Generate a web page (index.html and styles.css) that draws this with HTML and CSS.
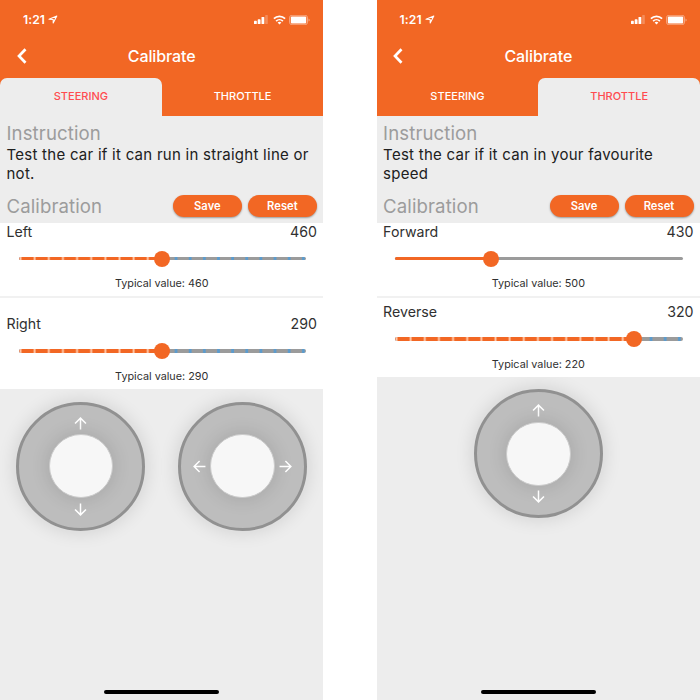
FILE: index.html
```
<!DOCTYPE html>
<html lang="en">
<head>
<meta charset="utf-8">
<title>Calibrate</title>
<link rel="stylesheet" href="styles.css">
</head>
<body>
<svg class="defs" width="0" height="0" aria-hidden="true">
  <symbol id="location" viewBox="0 0 10 9"><path d="M1 4.3 8.8 1 5.2 8V4.5Z" fill="none" stroke="#fff" stroke-width="1.1" stroke-linejoin="round"/></symbol>
  <symbol id="signal" viewBox="0 0 14 9"><g fill="#fff"><rect x="0" y="5.8" width="2.8" height="3.2" rx=".6"/><rect x="3.7" y="4.3" width="2.8" height="4.7" rx=".6"/><rect x="7.5" y="2" width="2.8" height="7" rx=".6"/><rect x="11.2" y="0" width="2.6" height="9" rx=".6" opacity=".25"/></g></symbol>
  <symbol id="wifi" viewBox="0 0 13 10"><g fill="none" stroke="#fff" stroke-width="1.7"><path d="M.9 3.7a8 8 0 0 1 11.2 0"/><path d="M3.1 6.1a4.9 4.9 0 0 1 6.8 0"/></g><path d="M4.6 7.6a2.8 2.8 0 0 1 3.8 0L6.5 9.6Z" fill="#fff"/></symbol>
  <symbol id="battery" viewBox="0 0 21 10"><rect x=".5" y=".3" width="18" height="9.4" rx="2.4" fill="none" stroke="#fff" stroke-opacity=".4"/><rect x="1.8" y="1.4" width="15.4" height="7.2" rx="1" fill="#fff"/><path d="M19.6 3.4v3.2q1-.5 1-1.6t-1-1.6Z" fill="#fff" opacity=".5"/></symbol>
  <symbol id="back" viewBox="0 0 10 16"><path d="M8.5 1.2 2 8l6.5 6.8" fill="none" stroke="#fff" stroke-width="2.7"/></symbol>
  <symbol id="arrow" viewBox="0 0 14 14"><path d="M7 13.4V1.6M1.1 7.1 7 1.2l5.9 5.9" fill="none" stroke="#fff" stroke-width="1.6"/></symbol>
</svg>
<main class="screens">
  <section class="phone">
    <header class="header">
      <div class="status"><span class="time">1:21</span><svg class="i-location"><use href="#location"/></svg><span class="grow"></span><svg class="i-signal"><use href="#signal"/></svg><svg class="i-wifi"><use href="#wifi"/></svg><svg class="i-battery"><use href="#battery"/></svg></div>
      <div class="titlebar"><svg class="i-back"><use href="#back"/></svg><h1>Calibrate</h1></div>
      <nav class="tabs"><span class="tab active">STEERING</span><span class="tab">THROTTLE</span></nav>
    </header>
    <div class="intro">
      <h2>Instruction</h2>
      <p>Test the car if it can run in straight line or<br>not.</p>
      <div class="actions"><h2>Calibration</h2><button>Save</button><button>Reset</button></div>
    </div>
    <div class="setting">
      <div class="row"><span>Left</span><span class="value">460</span></div>
      <div class="slider ticked"><div class="fill" style="width:49.8%"></div></div>
      <div class="typical">Typical value: 460</div>
    </div>
    <div class="setting tall">
      <div class="row"><span>Right</span><span class="value">290</span></div>
      <div class="slider ticked"><div class="fill" style="width:49.8%"></div></div>
      <div class="typical">Typical value: 290</div>
    </div>
    <div class="pads">
      <div class="pad vertical"><svg class="arrow up"><use href="#arrow"/></svg><div class="knob"></div><svg class="arrow down"><use href="#arrow"/></svg></div>
      <div class="pad"><svg class="arrow left"><use href="#arrow"/></svg><div class="knob"></div><svg class="arrow right"><use href="#arrow"/></svg></div>
    </div>
    <div class="home"></div>
  </section>
  <section class="phone">
    <header class="header">
      <div class="status"><span class="time">1:21</span><svg class="i-location"><use href="#location"/></svg><span class="grow"></span><svg class="i-signal"><use href="#signal"/></svg><svg class="i-wifi"><use href="#wifi"/></svg><svg class="i-battery"><use href="#battery"/></svg></div>
      <div class="titlebar"><svg class="i-back"><use href="#back"/></svg><h1>Calibrate</h1></div>
      <nav class="tabs"><span class="tab">STEERING</span><span class="tab active">THROTTLE</span></nav>
    </header>
    <div class="intro">
      <h2>Instruction</h2>
      <p>Test the car if it can in your favourite<br>speed</p>
      <div class="actions"><h2>Calibration</h2><button>Save</button><button>Reset</button></div>
    </div>
    <div class="setting">
      <div class="row"><span>Forward</span><span class="value">430</span></div>
      <div class="slider"><div class="fill" style="width:33.3%"></div></div>
      <div class="typical">Typical value: 500</div>
    </div>
    <div class="setting">
      <div class="row"><span>Reverse</span><span class="value">320</span></div>
      <div class="slider ticked"><div class="fill" style="width:83%"></div></div>
      <div class="typical">Typical value: 220</div>
    </div>
    <div class="pads">
      <div class="pad vertical"><svg class="arrow up"><use href="#arrow"/></svg><div class="knob"></div><svg class="arrow down"><use href="#arrow"/></svg></div>
    </div>
    <div class="home"></div>
  </section>
</main>
</body>
</html>
```
FILE: styles.css
```
* { box-sizing: border-box; }
body { margin: 0; background: #fff; font-family: Inter, "Liberation Sans", sans-serif; color: #303030; }
h1, h2, p { margin: 0; font-weight: 400; }
.defs { position: absolute; }
.screens { display: flex; justify-content: space-between; width: 700px; height: 700px; overflow: hidden; }
.phone { width: 323.4px; height: 700px; background: #ededed; display: flex; flex-direction: column; }
.header { height: 115.6px; background: #f26724; color: #fff; display: flex; flex-direction: column; flex: none; }
.status { height: 38px; display: flex; align-items: center; padding: 1px 13px 0 23px; }
.time { font-size: 12.2px; font-weight: 600; letter-spacing: .05px; }
.grow { flex: 1; }
.i-location { width: 10px; height: 9px; margin-left: 3px; }
.i-signal { width: 14px; height: 9px; margin-right: 4.5px; }
.i-wifi { width: 13px; height: 10px; margin-right: 3.5px; }
.i-battery { width: 21px; height: 10px; }
.titlebar { height: 40.3px; display: grid; grid-template-columns: 40px 1fr 40px; align-items: center; padding-bottom: 4px; }
.i-back { width: 10px; height: 16px; margin-left: 16.5px; }
h1 { font-size: 16px; line-height: 20px; font-weight: 500; text-align: center; letter-spacing: -.1px; white-space: nowrap; }
.tabs { display: flex; flex: 1; }
.tab { flex: 1; display: flex; align-items: center; justify-content: center; font-size: 11px; font-weight: 500; padding-bottom: 1px; }
.tab.active { background: #ededed; color: #ff4b50; border-radius: 7px 7px 0 0; }
.intro { height: 107.4px; flex: none; padding: 6.4px 6.5px 0; }
h2 { font-size: 18.6px; line-height: 22px; color: #9c9c9c; letter-spacing: .1px; }
p { font-size: 15px; line-height: 19px; letter-spacing: .26px; color: #202020; white-space: nowrap; padding-top: .6px; }
.actions { display: flex; align-items: center; gap: 6px; margin-top: 12.1px; }
.actions h2 { flex: 1; }
button { width: 69px; height: 22px; border: 0; border-radius: 11px; background: #f26724; color: #fff; font: 600 11.2px Inter, sans-serif; letter-spacing: .05px; padding: 0; box-shadow: 0 1px 2px rgba(0,0,0,.35); }
.setting { height: 73.2px; flex: none; background: #fff; padding: 0 6.5px; }
.setting + .setting { height: 80.8px; border-top: 2px solid #f1f1f1; padding-top: 5px; }
.setting + .setting.tall { height: 93px; padding-top: 17.2px; }
.row { display: flex; justify-content: space-between; font-size: 14.2px; line-height: 18px; letter-spacing: 0; }
.slider { position: relative; height: 3.4px; margin: 16px 11px 0 12px; border-radius: 2px; background: #9b9b9b; }
.slider.ticked { background: linear-gradient(90deg, transparent 5.3px, #5b9bcd 6.2px, #5b9bcd 8px, transparent 8.9px) -5.6px 0 / 14.15px 100% repeat-x, #9b9b9b; }
.fill { position: relative; height: 100%; border-radius: 2px 0 0 2px; background: #f26724; }
.ticked .fill { background: linear-gradient(90deg, transparent 5.7px, #ffc9aa 6.6px, #ffc9aa 7.6px, transparent 8.5px) -5.6px 0 / 14.15px 100% repeat-x, #f26724; }
.fill::after { content: ""; position: absolute; right: -8px; top: -6.3px; width: 16px; height: 16px; border-radius: 50%; background: #f26724; }
.typical { text-align: center; font-size: 10.8px; line-height: 14px; margin-top: 17px; letter-spacing: 0; }
.pads { flex: 1; display: flex; justify-content: space-around; align-items: flex-start; padding-top: 12.4px; overflow: hidden; }
.pad { width: 129px; height: 129px; border-radius: 50%; border: 3px solid #919191; background: #bdbdbd; display: flex; align-items: center; justify-content: center; gap: 4.3px; box-shadow: 0 0 18px 2px rgba(0,0,0,.11); }
.pad.vertical { flex-direction: column; }
.arrow { width: 13px; height: 13px; flex: none; }
.down { transform: rotate(180deg); }
.left { transform: rotate(-90deg); }
.right { transform: rotate(90deg); }
.knob { width: 64.5px; height: 64.5px; border-radius: 50%; border: 1.5px solid #cbcbcb; background: #f7f7f7; box-shadow: 0 0 18px 2px rgba(0,0,0,.11); flex: none; }
.home { width: 115px; height: 3.6px; border-radius: 2px; background: #000; margin: 0 auto 6.4px; flex: none; }
```
